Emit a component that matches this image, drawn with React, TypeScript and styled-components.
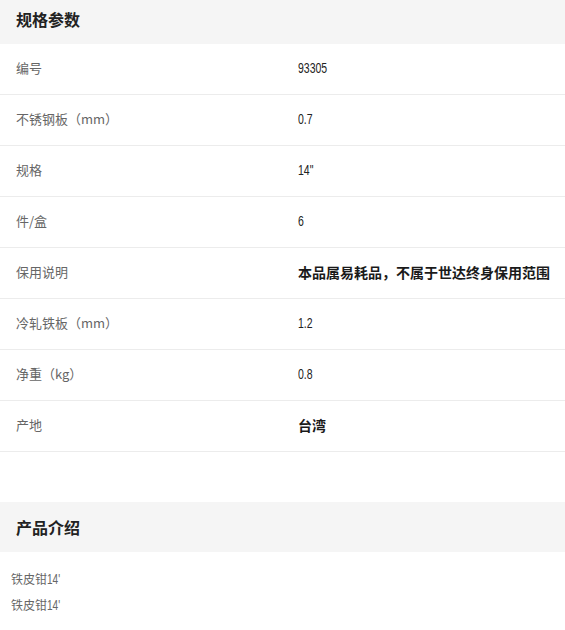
import React from "react";
import styled, { createGlobalStyle } from "styled-components";

const GlobalStyle = createGlobalStyle`
  body {
    margin: 0;
    background: #fff;
    font-family: "Noto Sans CJK SC", "Noto Sans", sans-serif;
  }
`;

const specs: { label: string; value: string; cjk?: boolean }[] = [
  { label: "编号", value: "93305" },
  { label: "不锈钢板（mm）", value: "0.7" },
  { label: "规格", value: "14\"" },
  { label: "件/盒", value: "6" },
  { label: "保用说明", value: "本品属易耗品，不属于世达终身保用范围", cjk: true },
  { label: "冷轧铁板（mm）", value: "1.2" },
  { label: "净重（kg）", value: "0.8" },
  { label: "产地", value: "台湾", cjk: true },
];

const App = () => {
  return (
    <Page>
      <GlobalStyle />
      <SectionHead>规格参数</SectionHead>
      <SpecList>
        {specs.map((s) => (
          <SpecRow key={s.label}>
            <Label>{s.label}</Label>
            {s.cjk ? <CjkValue>{s.value}</CjkValue> : <NumValue>{s.value}</NumValue>}
          </SpecRow>
        ))}
      </SpecList>
      <Spacer />
      <SectionHead $tall>产品介绍</SectionHead>
      <Intro>
        <IntroLine>
          铁皮钳<IntroNum>14'</IntroNum>
        </IntroLine>
        <IntroLine>
          铁皮钳<IntroNum>14'</IntroNum>
        </IntroLine>
      </Intro>
    </Page>
  );
};

export default App;

const Page = styled.div`
  width: 565px;
`;

const SectionHead = styled.div<{ $tall?: boolean }>`
  height: ${(p) => (p.$tall ? "50px" : "44px")};
  display: flex;
  align-items: center;
  padding: 0 16px ${(p) => (p.$tall ? "0" : "7px")};
  box-sizing: border-box;
  background-color: #f5f5f5;
  font-size: 16px;
  font-weight: 700;
  color: #222;
`;

const SpecList = styled.div`
  display: flex;
  flex-direction: column;
`;

const SpecRow = styled.div`
  display: grid;
  grid-template-columns: 282px 1fr;
  align-items: center;
  height: 51px;
  box-sizing: border-box;
  padding: 0 0 3px 16px;
  border-bottom: 1px solid #ececec;
`;

const Label = styled.span`
  font-size: 13px;
  color: #666;
`;

const CjkValue = styled.span`
  font-size: 14px;
  font-weight: 700;
  color: #1a1a1a;
  white-space: nowrap;
`;

/* condensed digits, squeezed from a regular face */
const NumValue = styled.span`
  display: inline-block;
  justify-self: start;
  font-family: "Liberation Sans", Arial, sans-serif;
  font-size: 15px;
  color: #222;
  transform: scaleX(0.7);
  transform-origin: left center;
`;

const Spacer = styled.div`
  height: 50px;
`;

const Intro = styled.div`
  padding: 17px 11px;
  display: flex;
  flex-direction: column;
  gap: 6px;
`;

const IntroLine = styled.div`
  font-size: 12px;
  color: #666;
  line-height: 20px;
`;

const IntroNum = styled.span`
  display: inline-block;
  font-family: "Liberation Sans", Arial, sans-serif;
  font-size: 14px;
  transform: scaleX(0.72);
  transform-origin: left center;
`;
